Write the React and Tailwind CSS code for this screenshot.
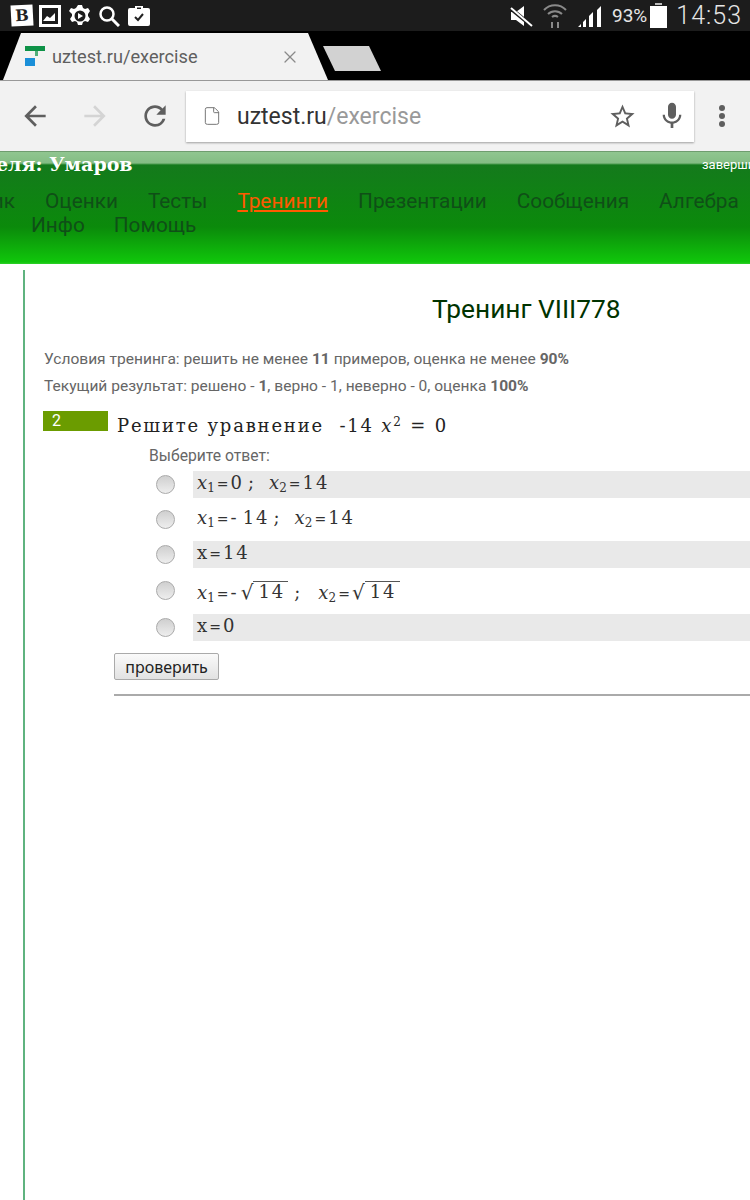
import React from 'react';
import { X, File } from 'lucide-react';

const ANSWERS = [
  { shaded: true, mt: 'mt-0', body: <><V n="1" /><E /><D>0</D><S /><V n="2" /><E /><D>14</D></> },
  { shaded: false, mt: 'mt-[8px]', body: <><V n="1" /><E /><D>-<span className="ml-[4px]">14</span></D><S /><V n="2" /><E /><D>14</D></> },
  { shaded: true, mt: 'mt-[8px]', body: <>x<E /><D>14</D></> },
  { shaded: false, mt: 'mt-[9px]', body: <div className="pt-[4px]"><V n="1" /><E />-<span className="ml-[4px]" /><Root /><span className="ml-[6px] mr-[18px]">;</span><V n="2" /><E /><Root /></div> },
  { shaded: true, mt: 'mt-[10px]', body: <>x<E /><D>0</D></> },
];

function V({ n }) {
  return <span className="italic">x<sub className="text-[12px] not-italic">{n}</sub></span>;
}

function E() {
  return <span className="text-[14px] mx-[2px]">=</span>;
}

function D({ children }) {
  return <span className="tracking-[2px]">{children}</span>;
}

function S() {
  return <span className="ml-[4px] mr-[15px]">;</span>;
}

function Root() {
  return (
    <span className="inline-flex items-end">
      <span className="text-[20px] leading-none font-['DejaVu_Sans']">√</span>
      <span className="border-t border-[#555] pl-[5px] pr-[3px] leading-[20px] tracking-[2px]">14</span>
    </span>
  );
}

const StatusLeft = () => (
  <div className="flex items-center gap-[6px] pl-[11px]">
    <div className="w-[22px] h-[21px] bg-white flex items-center justify-center -rotate-3">
      <span className="text-[16px] font-black leading-none text-[#222] font-['DejaVu_Serif']">B</span>
    </div>
    <div className="w-[22px] h-[22px] border-[3px] border-white flex items-end">
      <svg width="16" height="16" viewBox="0 0 16 16"><path d="M1 13 L5 8 L8 10 L13 5 V13 Z" fill="#fff" /></svg>
    </div>
    <svg width="24" height="24" viewBox="0 0 24 24" className="ml-[1px]">
      <path fill="#fff" fillRule="evenodd" d="M10 1h4l1 3 2 1 3-1 2 3-2 3v2l2 3-2 3-3-1-2 1-1 3h-4l-1-3-2-1-3 1-2-3 2-3v-2L1 7l2-3 3 1 2-1zM12 6.500a5.500 5.500 0 1 0 0 11 5.500 5.500 0 0 0 0-11z" />
      <path fill="#fff" d="M10 9l5 3-5 3z" />
    </svg>
    <svg width="22" height="22" viewBox="0 0 22 22" fill="none" stroke="#fff">
      <circle cx="9" cy="9" r="6.500" strokeWidth="2.500" />
      <path d="M14 14l7 7" strokeWidth="3" />
    </svg>
    <svg width="22" height="21" viewBox="0 0 22 21" className="ml-[2px]">
      <path fill="#fff" fillRule="evenodd" d="M7 3V1h8v2h5a2 2 0 0 1 2 2v14a2 2 0 0 1-2 2H2a2 2 0 0 1-2-2V5a2 2 0 0 1 2-2zM9 2.500V4h4V2.500z" />
      <path d="M7 12l3 3 5-6" fill="none" stroke="#222" strokeWidth="2" />
    </svg>
  </div>
);

const StatusRight = () => (
  <div className="flex items-center pr-[8px]">
    <svg width="23" height="22" viewBox="0 0 23 22">
      <path fill="#fff" d="M1 7h5l8-6v20l-8-6H1z" />
      <path d="M0 3l22 18" stroke="#1c1c1c" strokeWidth="4" />
      <path d="M1 3l21 18" stroke="#fff" strokeWidth="2" />
    </svg>
    <svg width="24" height="26" viewBox="0 0 24 26" fill="none" stroke="#8a8a8a" strokeWidth="2" className="ml-[10px]">
      <path d="M1 7a15 15 0 0 1 22 0" />
      <path d="M5 11a10 10 0 0 1 14 0" />
      <path d="M9 14a5 5 0 0 1 6 0" />
      <path d="M9 19v6M15 25v-6" />
    </svg>
    <svg width="25" height="23" viewBox="0 0 25 23" className="ml-[11px]">
      <path fill="#fff" d="M0 23l3-3v3zM5 23v-5l3-3v8zM11 23V12l4-4v15zM19 23V6l4-4v21z" />
    </svg>
    <span className="ml-[9px] text-[19px] text-[#e6e6e6] font-['Roboto',sans-serif] leading-none">93%</span>
    <svg width="17" height="25" viewBox="0 0 17 25" className="ml-[3px]">
      <path fill="#bbb" d="M5 0h7v2H5z" />
      <path fill="#fff" d="M0 3h17v22H0z" />
    </svg>
    <span className="ml-[9px] text-[25px] text-[#e6e6e6] tracking-[1px] font-['Roboto',sans-serif] font-light leading-none">14:53</span>
  </div>
);

const BrowserChrome = () => (
  <>
    <div className="h-[31px] bg-[#1c1c1c] flex items-center justify-between">
      <StatusLeft />
      <StatusRight />
    </div>
    <div className="h-[50px] bg-black flex items-end border-b border-[#999]">
      <div className="w-[325px] h-[47px] ml-[3px] bg-[#f2f2f2] [clip-path:polygon(0_100%,18px_0,305px_0,100%_100%)] flex items-center">
        <svg width="20" height="20" viewBox="0 0 20 20" className="ml-[22px] mt-[-1px]">
          <path fill="#0e9247" d="M0 0h20v5H0z" />
          <path fill="#0e9247" d="M10 5h3v5h-3z" opacity="0.700" />
          <path fill="#1a8fd8" d="M0 12h10v8H0z" />
        </svg>
        <span className="ml-[7px] text-[18.200px] text-[#5f5f5f] font-['Roboto',sans-serif]">uztest.ru/exercise</span>
        <X size={20} strokeWidth={1.500} className="ml-[82px] text-[#8a8a8a]" />
      </div>
      <div className="w-[58px] h-[25px] mb-[9px] -ml-[5px] bg-[#d2d2d2] [clip-path:polygon(0_0,46px_0,100%_100%,12px_100%)]" />
    </div>
    <div className="h-[70px] bg-[#f2f2f2] flex items-center">
      <svg width="32" height="32" viewBox="0 0 24 24" className="ml-[19px] fill-[#5f5f5f]">
        <path d="M20 11H7.830l5.590-5.590L12 4l-8 8 8 8 1.410-1.410L7.830 13H20v-2z" />
      </svg>
      <svg width="32" height="32" viewBox="0 0 24 24" className="ml-[28px] fill-[#d4d4d4] -scale-x-100">
        <path d="M20 11H7.830l5.590-5.590L12 4l-8 8 8 8 1.410-1.410L7.830 13H20v-2z" />
      </svg>
      <svg width="32" height="32" viewBox="0 0 24 24" className="ml-[28px] fill-[#5f5f5f]">
        <path d="M17.650 6.350A7.958 7.958 0 0 0 12 4c-4.420 0-7.990 3.580-7.990 8s3.570 8 7.990 8c3.730 0 6.840-2.550 7.730-6h-2.080A5.990 5.990 0 0 1 12 18c-3.310 0-6-2.690-6-6s2.690-6 6-6c1.660 0 3.140.690 4.220 1.780L13 11h7V4l-2.350 2.350z" />
      </svg>
      <div className="ml-[15px] w-[508px] h-[51px] bg-white shadow-[0_1px_2px_rgba(0,0,0,0.350)] flex items-center">
        <File size={20} strokeWidth={1.200} className="ml-[16px] text-[#777]" />
        <span className="ml-[15px] pt-[3px] text-[23px] text-[#333] font-['Roboto',sans-serif]">uztest.ru<span className="text-[#999]">/exercise</span></span>
        <svg width="29" height="29" viewBox="0 0 24 24" className="ml-auto fill-[#5f5f5f]">
          <path d="M22 9.240l-7.190-.620L12 2 9.190 8.630 2 9.240l5.460 4.730L5.820 21 12 17.270 18.180 21l-1.630-7.030L22 9.240zM12 15.400l-3.760 2.270 1-4.280-3.320-2.880 4.380-.380L12 6.100l1.710 4.040 4.380.380-3.320 2.880 1 4.280L12 15.400z" />
        </svg>
        <svg width="32" height="32" viewBox="0 0 24 24" className="ml-[19px] mr-[6px] fill-[#5f5f5f]">
          <path d="M12 14c1.660 0 2.990-1.340 2.990-3L15 5c0-1.660-1.340-3-3-3S9 3.340 9 5v6c0 1.660 1.340 3 3 3zm5.300-3c0 3-2.540 5.100-5.300 5.100S6.700 14 6.700 11H5c0 3.410 2.720 6.230 6 6.720V21h2v-3.280c3.280-.48 6-3.300 6-6.720h-1.700z" />
        </svg>
      </div>
      <div className="ml-[25px] flex flex-col gap-[2px]">
        <span className="w-[6px] h-[6px] rounded-full bg-[#5f5f5f]" />
        <span className="w-[6px] h-[6px] rounded-full bg-[#5f5f5f]" />
        <span className="w-[6px] h-[6px] rounded-full bg-[#5f5f5f]" />
      </div>
    </div>
  </>
);

const NAV_ROW = ['Оценки', 'Тесты', 'Тренинги', 'Презентации', 'Сообщения', 'Алгебра'];

const SiteHeader = () => (
  <div className="h-[113px] border-t border-[#6f9d6f] overflow-hidden font-['Roboto',sans-serif] bg-[linear-gradient(to_bottom,#90c690_0,#84bd84_11px,#147a1c_13px,#0b8a0b_75px,#10c60b_110px,#3fd53a_113px)]">
    <div className="flex justify-between items-start h-[28px]">
      <span className="-ml-[4px] text-[19px] leading-[25px] font-bold text-white font-['DejaVu_Serif',serif] whitespace-nowrap">еля: Умаров</span>
      <span className="text-[13px] leading-[16px] mt-[5px] text-white whitespace-nowrap w-[48px] overflow-hidden">завершить</span>
    </div>
    <div className="text-[20.800px] leading-[24px] text-[#0f4f17] mt-[9px]">
      <div className="flex gap-[30px] -ml-[1px] whitespace-nowrap">
        <span className="w-[16px] overflow-hidden flex justify-end">ик</span>
        {NAV_ROW.map(label => (
          <span key={label} className={label === 'Тренинги' ? 'text-[#ff5a00] underline' : ''}>{label}</span>
        ))}
      </div>
      <div className="flex gap-[29px] pl-[31px]">
        <span>Инфо</span>
        <span>Помощь</span>
      </div>
    </div>
  </div>
);

const App = () => (
  <div className="w-[750px] h-[1200px] overflow-hidden bg-white">
    <BrowserChrome />
    <SiteHeader />
    <div className="ml-[23px] mt-[6px] h-[930px] border-l-2 border-[#5fb37f] font-['Roboto',sans-serif]">
      <h1 className="ml-[407px] pt-[23px] text-[26.300px] leading-[32px] text-[#003300] whitespace-nowrap">Тренинг VIII778</h1>
      <div className="ml-[19px] mt-[21px] text-[15.550px] leading-[27px] text-[#666]">
        <p>Условия тренинга: решить не менее <b>11</b> примеров, оценка не менее <b>90%</b></p>
        <p>Текущий результат: решено - <b>1</b>, верно - 1, неверно - 0, оценка <b>100%</b></p>
      </div>
      <div className="ml-[18px] mt-[11px] flex items-start h-[27px]">
        <div className="w-[65px] h-[20px] bg-[#6b9c00] text-white text-[16px] leading-[20px] pl-[9px]">2</div>
        <div className="ml-[9px] mt-[3px] text-[18px] leading-[24px] text-[#222] tracking-[1.800px] font-['DejaVu_Serif',serif] whitespace-nowrap">
          Решите уравнение <span className="ml-[8px]">-14</span> <span className="italic">x</span><sup className="text-[12px]">2</sup> = 0
        </div>
      </div>
      <p className="ml-[124px] mt-[8px] text-[15.700px] leading-[20px] text-[#666]">Выберите ответ:</p>
      <div className="mt-[5px]">
        {ANSWERS.map((a, i) => (
          <div key={i} className={`flex items-center ${a.mt}`}>
            <input type="radio" name="answer" className="ml-[131px] w-[19px] h-[19px] shrink-0 appearance-none rounded-full border border-[#aaa] bg-[linear-gradient(to_bottom,#cfcfcf,#eeeeee)]" />
            <div className={`ml-[18px] flex-1 h-[27px] pl-[4px] text-[18px] leading-[23px] text-[#333] font-['DejaVu_Serif',serif] whitespace-nowrap ${a.shaded ? 'bg-[#e9e9e9]' : ''}`}>
              {a.body}
            </div>
          </div>
        ))}
      </div>
      <button className="ml-[89px] mt-[12px] block w-[105px] h-[27px] rounded-[2px] border border-[#aaa] bg-[linear-gradient(to_bottom,#fafafa,#e2e2e2)] text-[16px] leading-[24px] text-[#222] font-['Noto_Sans',sans-serif]">проверить</button>
      <div className="ml-[89px] mt-[14px] h-[2px] bg-[#aaa]" />
    </div>
  </div>
);

export default App;
